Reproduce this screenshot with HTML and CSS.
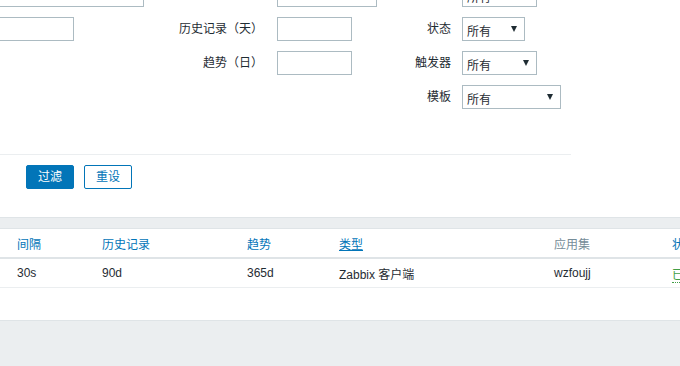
FILE: index.html
```html
<!DOCTYPE html>
<html lang="zh-CN">
<head>
<meta charset="utf-8">
<title>监控项</title>
<link rel="stylesheet" href="styles.css">
</head>
<body>
<div class="filter-box">
  <div class="filter-grid">
    <div class="field f1"><div class="input w144 shift">所有</div></div>
    <div class="label"></div>
    <div class="field"><div class="input w100">所有</div></div>
    <div class="label"></div>
    <div class="field"><div class="select w75"><span>所有</span><i class="caret"></i></div></div>

    <div class="field f1"><div class="input w75 shift"></div></div>
    <div class="label">历史记录（天）</div>
    <div class="field"><div class="input w75"></div></div>
    <div class="label">状态</div>
    <div class="field"><div class="select w63"><span>所有</span><i class="caret"></i></div></div>

    <div class="field f1"></div>
    <div class="label">趋势（日）</div>
    <div class="field"><div class="input w75"></div></div>
    <div class="label">触发器</div>
    <div class="field"><div class="select w75"><span>所有</span><i class="caret"></i></div></div>

    <div class="field f1"></div>
    <div class="label"></div>
    <div class="field"></div>
    <div class="label">模板</div>
    <div class="field"><div class="select w99"><span>所有</span><i class="caret"></i></div></div>
  </div>
  <div class="separator"></div>
  <div class="buttons">
    <button class="btn primary">过滤</button>
    <button class="btn alt">重设</button>
  </div>
</div>

<div class="table-box">
  <table class="list">
    <colgroup>
      <col class="c1"><col class="c2"><col class="c3"><col class="c4"><col class="c5"><col class="c6">
    </colgroup>
    <thead>
      <tr>
        <th class="first"><a class="sort">间隔</a></th>
        <th><a class="sort">历史记录</a></th>
        <th><a class="sort">趋势</a></th>
        <th><a class="sort active">类型</a></th>
        <th class="plain">应用集</th>
        <th><a class="sort">状态</a></th>
      </tr>
    </thead>
    <tbody>
      <tr>
        <td class="first">30s</td>
        <td>90d</td>
        <td>365d</td>
        <td>Zabbix 客户端</td>
        <td>wzfoujj</td>
        <td><a class="status">已启用</a></td>
      </tr>
    </tbody>
  </table>
</div>
</body>
</html>
```

FILE: styles.css
```css
html, body {
  margin: 0;
  padding: 0;
}
body {
  background: #ebeef0;
  color: #1f2c33;
  font-family: "Liberation Sans", Arial, "Noto Sans CJK SC", sans-serif;
  font-size: 12px;
  overflow: hidden;
  width: 680px;
  height: 366px;
}

.filter-box {
  background: #ffffff;
  border-bottom: 1px solid #dfe4e7;
  margin-top: -17px;
  padding-bottom: 28px;
}

.filter-grid {
  display: grid;
  grid-template-columns: 159px 118px 100px 85px 1fr;
  grid-auto-rows: 24px;
  row-gap: 10px;
}

.label {
  text-align: right;
  line-height: 24px;
  white-space: nowrap;
}
.filter-grid .label:nth-child(5n+2) { padding-right: 14px; }
.filter-grid .label:nth-child(5n+4) { padding-right: 11px; }

.field {
  display: flex;
  align-items: stretch;
}

.input, .select {
  box-sizing: border-box;
  height: 24px;
  border: 1px solid #acbbc2;
  background: #fff;
  padding: 0 4px;
  line-height: 23px;
  white-space: nowrap;
  overflow: hidden;
}
.shift { margin-left: -1px; }
.w63 { width: 63px; }
.w75 { width: 75px; }
.w99 { width: 99px; }
.w100 { width: 100px; }
.w144 { width: 145px; }

.select {
  display: flex;
  align-items: center;
  justify-content: space-between;
  padding: 0 7px 0 4px;
  line-height: normal;
}
.select span { padding-top: 2px; }
.caret {
  display: block;
  width: 0;
  height: 0;
  border-left: 3px solid transparent;
  border-right: 3px solid transparent;
  border-top: 6px solid #1f2c33;
}

.separator {
  width: 571px;
  height: 1px;
  background: #ebeef0;
  margin-top: 45px;
}

.buttons {
  display: flex;
  gap: 10px;
  padding-left: 26px;
  margin-top: 10px;
}
.btn {
  box-sizing: border-box;
  width: 48px;
  height: 24px;
  border: 1px solid #0275b8;
  border-radius: 2px;
  font-family: "Liberation Sans", Arial, "Noto Sans CJK SC", sans-serif;
  font-size: 12px;
  padding: 0;
  line-height: 22px;
}
.btn.primary { background: #0275b8; color: #ffffff; }
.btn.alt { background: #ffffff; color: #0275b8; }

.table-box {
  background: #ffffff;
  margin-top: 10px;
  border-top: 1px solid #dfe4e7;
  border-bottom: 1px solid #dfe4e7;
  height: 91px;
  overflow: hidden;
}

.list {
  border-collapse: collapse;
  table-layout: fixed;
  width: 760px;
}
.list col.c1 { width: 97px; }
.list col.c2 { width: 145px; }
.list col.c3 { width: 92px; }
.list col.c4 { width: 215px; }
.list col.c5 { width: 118px; }
.list col.c6 { width: 93px; }

.list th, .list td {
  text-align: left;
  font-weight: normal;
  padding: 0 5px;
  white-space: nowrap;
  overflow: hidden;
}
.list th {
  height: 28px;
  border-bottom: 2px solid #dfe4e7;
}
.list td {
  height: 28px;
  border-bottom: 1px solid #ebeef0;
}
.list .first { padding-left: 17px; }

.sort {
  color: #0275b8;
  text-decoration: none;
}
.sort.active {
  text-decoration: underline;
}
.plain { color: #768d99; }

.status {
  color: #429e47;
  border-bottom: 1px dotted #429e47;
  text-decoration: none;
}
```
